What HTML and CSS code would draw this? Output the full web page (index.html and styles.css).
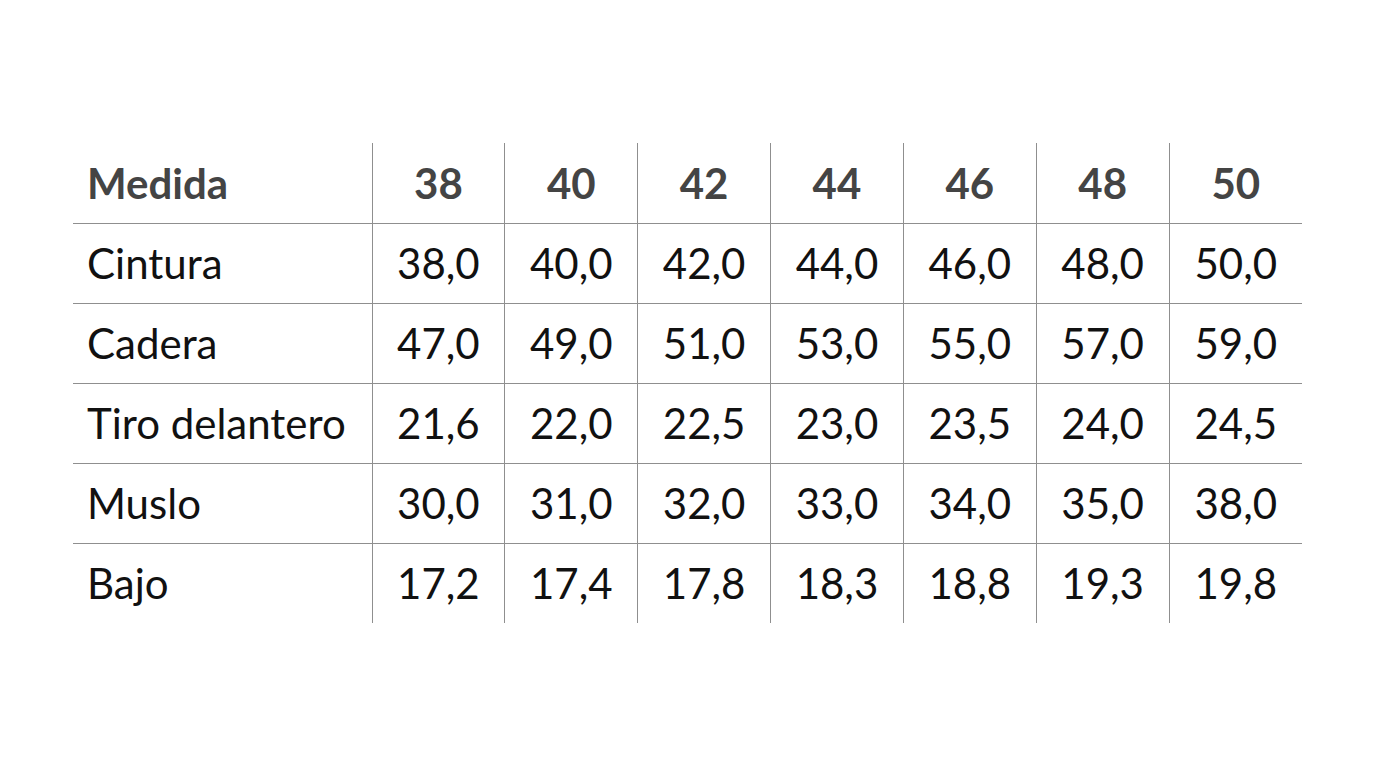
FILE: index.html
```html
<!DOCTYPE html>
<html lang="es">
<head>
<meta charset="utf-8">
<title>Tabla de medidas</title>
<link rel="stylesheet" href="styles.css">
</head>
<body>
<main class="page">
<table class="sizes">
<colgroup><col class="col-label"><col><col><col><col><col><col><col></colgroup>
<thead>
<tr><th class="label">Medida</th><th>38</th><th>40</th><th>42</th><th>44</th><th>46</th><th>48</th><th>50</th></tr>
</thead>
<tbody>
<tr><td class="label">Cintura</td><td>38,0</td><td>40,0</td><td>42,0</td><td>44,0</td><td>46,0</td><td>48,0</td><td>50,0</td></tr>
<tr><td class="label">Cadera</td><td>47,0</td><td>49,0</td><td>51,0</td><td>53,0</td><td>55,0</td><td>57,0</td><td>59,0</td></tr>
<tr><td class="label">Tiro delantero</td><td>21,6</td><td>22,0</td><td>22,5</td><td>23,0</td><td>23,5</td><td>24,0</td><td>24,5</td></tr>
<tr><td class="label">Muslo</td><td>30,0</td><td>31,0</td><td>32,0</td><td>33,0</td><td>34,0</td><td>35,0</td><td>38,0</td></tr>
<tr><td class="label">Bajo</td><td>17,2</td><td>17,4</td><td>17,8</td><td>18,3</td><td>18,8</td><td>19,3</td><td>19,8</td></tr>
</tbody>
</table>
</main>
</body>
</html>
```
FILE: styles.css
```css
html, body {
  margin: 0;
  padding: 0;
  background: #ffffff;
}
.page {
  padding: 143px 0 0 73px;
}
.sizes {
  border-collapse: collapse;
  table-layout: fixed;
  width: 1229px;
  font-family: Lato, "Open Sans", sans-serif;
  font-size: 42px;
  color: #111111;
}
.sizes .col-label {
  width: 299px;
}
.sizes tr {
  height: 80px;
}
.sizes th, .sizes td {
  box-sizing: border-box;
  padding: 0;
  text-align: center;
  vertical-align: middle;
  border-left: 1px solid #8f8f8f;
  border-top: 1px solid #8f8f8f;
  white-space: nowrap;
}
.sizes .label {
  text-align: left;
  padding-left: 14px;
  border-left: none;
}
.sizes thead th {
  border-top: none;
  font-weight: 700;
  color: #444444;
}
```
